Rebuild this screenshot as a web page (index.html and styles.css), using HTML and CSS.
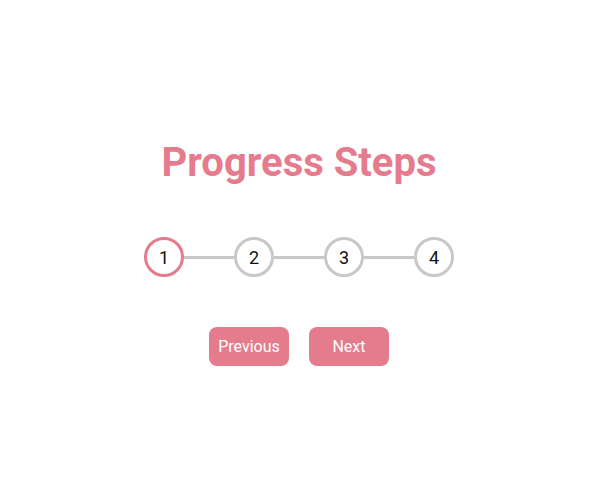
FILE: index.html
```html
<!DOCTYPE html>
<html lang="en">
<head>
<meta charset="UTF-8">
<title>Progress Steps</title>
<link rel="stylesheet" href="styles.css">
</head>
<body>
<main class="app">
  <h1 class="title">Progress Steps</h1>
  <div class="steps">
    <div class="step active">1</div>
    <div class="bar"></div>
    <div class="step">2</div>
    <div class="bar"></div>
    <div class="step">3</div>
    <div class="bar"></div>
    <div class="step">4</div>
  </div>
  <div class="actions">
    <button class="btn">Previous</button>
    <button class="btn">Next</button>
  </div>
</main>
</body>
</html>
```
FILE: styles.css
```css
* { box-sizing: border-box; }
html, body { margin: 0; padding: 0; }
body {
  font-family: Roboto, "Liberation Sans", sans-serif;
  background: #ffffff;
  height: 497px;
  padding-right: 7px;
  display: flex;
  align-items: flex-start;
  justify-content: center;
}
.app {
  display: flex;
  flex-direction: column;
  align-items: center;
  padding-top: 138px;
}
.title {
  margin: 0;
  font-size: 40px;
  font-weight: 700;
  color: #e57c8d;
  line-height: 50px;
}
.steps {
  display: flex;
  align-items: center;
  margin-top: 49px;
}
.step {
  width: 40px;
  height: 40px;
  border-radius: 50%;
  border: 3px solid #c8c8c8;
  background: #fff;
  display: flex;
  align-items: center;
  justify-content: center;
  font-size: 18px;
  color: #111;
}
.step.active { border-color: #e57c8d; }
.bar {
  width: 50px;
  height: 3px;
  background: #c8c8c8;
}
.actions {
  display: flex;
  gap: 20px;
  margin-top: 50px;
}
.btn {
  width: 80px;
  height: 39px;
  border: 0;
  border-radius: 8px;
  background: #e57c8d;
  color: #fff;
  font-family: Roboto, "Liberation Sans", sans-serif;
  font-size: 16px;
  padding: 0;
}
```
